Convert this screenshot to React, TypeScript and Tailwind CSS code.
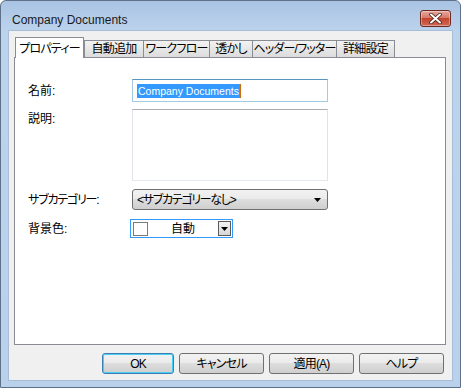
import React from 'react';

const tabs = [
  { label: 'プロパティー', w: 'w-[69px]', active: true },
  { label: '自動追加', w: 'w-[60px]' },
  { label: 'ワークフロー', w: 'w-[67px]' },
  { label: '透かし', w: 'w-[44px]' },
  { label: 'ヘッダー/フッター', w: 'w-[85px]' },
  { label: '詳細設定', w: 'w-[59px]' },
];

const DownArrow = () => (
  <svg width="7" height="4" viewBox="0 0 7 4">
    <path d="M0 0h7L3.5 4z" fill="#000" />
  </svg>
);

const CloseButton = () => (
  <div className="mt-[9px] w-[31px] h-[17px] rounded-[3px] border border-[#6d2a22] bg-[linear-gradient(#e4a89d_0%,#d67a6b_45%,#c4452f_50%,#cf6a55_100%)] flex items-center justify-center shadow-[inset_0_0_0_1px_rgba(255,255,255,0.35)]">
    <svg width="13" height="11" viewBox="0 0 13 11">
      <path d="M2 1.5l9 8M11 1.5l-9 8" stroke="#4a1d17" strokeWidth="3.6" strokeLinecap="round" />
      <path d="M2 1.5l9 8M11 1.5l-9 8" stroke="#fff" strokeWidth="2" strokeLinecap="round" />
    </svg>
  </div>
);

const Button = ({ children, w, focus }: { children: React.ReactNode; w: string; focus?: boolean }) => (
  <button
    className={
      w +
      ' h-[21px] rounded-[3px] border text-[12px] leading-none text-black tracking-[-0.8px] bg-[linear-gradient(#f2f2f2_0%,#ebebeb_45%,#dddddd_50%,#cfcfcf_100%)] ' +
      (focus ? 'border-[#3c7fb1] shadow-[inset_0_0_0_1px_#48cdf7]' : 'border-[#707070]')
    }
  >
    {children}
  </button>
);

export default function App() {
  return (
    <div className="w-[461px] h-[388px] bg-white font-['Liberation_Sans','Noto_Sans_CJK_JP',sans-serif] [font-feature-settings:'palt'] text-[12px] text-black">
      <div className="w-full h-full flex flex-col rounded-t-[6px] border border-[#5f7188] bg-[linear-gradient(#a9c3e3_0px,#bcd3ec_30px,#b9d1ea_100%)] px-[7px] pb-[6px]">
        {/* title bar */}
        <div className="h-[29px] flex items-start justify-between pr-[2px]">
          <span className="mt-[10px] ml-[4px] text-[12px] text-[#1a1a1a] font-['Liberation_Sans',sans-serif]">Company Documents</span>
          <CloseButton />
        </div>

        {/* client area */}
        <div className="flex-1 flex flex-col bg-[#f0f0f0] border border-[#a8bed8] pt-[6px]">
          {/* tabs */}
          <div className="flex items-end h-[20px] ml-[6px] tracking-[-0.8px]">
            {tabs.map((t, i) =>
              t.active ? (
                <div
                  key={t.label}
                  className={t.w + ' relative z-10 h-[21px] -mb-px bg-white border border-b-0 border-[#898c95] flex items-center justify-center pt-[1px] whitespace-nowrap'}
                >
                  {t.label}
                </div>
              ) : (
                <div
                  key={t.label}
                  className={
                    t.w +
                    ' h-[17px] -ml-px border border-b-0 border-[#898c95] bg-[linear-gradient(#f2f2f2,#dcdcdc)] flex items-center justify-center whitespace-nowrap ' +
                    (i === 1 ? 'ml-0' : '')
                  }
                >
                  {t.label}
                </div>
              )
            )}
          </div>

          {/* panel */}
          <div className="ml-[5px] w-[432px] h-[288px] bg-white border border-[#898c95] pl-[13px] pt-[21px] flex flex-col">
            <div className="flex items-center h-[23px]">
              <span className="w-[104px]">名前:</span>
              <div className="relative w-[196px] h-[23px] border border-[#a4c9e3] border-t-[#5794bf] flex items-center pl-[4px]">
                <span className="bg-[#3399ff] text-white font-['Liberation_Sans',sans-serif] text-[10.5px] leading-[14px] px-px">Company Documents</span>
                <span className="w-px h-[14px] bg-[#d26a00]" />
              </div>
            </div>

            <div className="flex items-start mt-[7px]">
              <span className="w-[104px] mt-[1px]">説明:</span>
              <div className="w-[196px] h-[72px] border border-[#e2e3ea] border-t-[#abadb3] border-b-[#e3e9ef]" />
            </div>

            <div className="flex items-center mt-[8px]">
              <span className="w-[104px] tracking-[-1.2px]">サブカテゴリー:</span>
              <div className="w-[196px] h-[21px] rounded-[3px] border border-[#707070] bg-[linear-gradient(#f2f2f2_0%,#ebebeb_45%,#dddddd_50%,#cfcfcf_100%)] flex items-center justify-between pl-[4px] pr-[6px]">
                <span className="tracking-[-1.3px]">&lt;サブカテゴリーなし&gt;</span>
                <DownArrow />
              </div>
            </div>

            <div className="flex items-center mt-[9px]">
              <span className="w-[102px]">背景色:</span>
              <div className="w-[103px] h-[19px] border border-[#3399ff] bg-white flex items-center pl-[2px] pr-px">
                <div className="w-[15px] h-[14px] border border-[#7a7a7a]" />
                <span className="flex-1 text-center">自動</span>
                <div className="w-[13px] h-[15px] border border-[#5a5a5a] bg-[linear-gradient(#f4f4f4,#d6d6d6)] flex items-center justify-center">
                  <DownArrow />
                </div>
              </div>
            </div>
          </div>

          {/* buttons */}
          <div className="flex justify-end gap-[5px] mt-[8px] pr-[8px]">
            <Button w="w-[72px]" focus>OK</Button>
            <Button w="w-[85px]">キャンセル</Button>
            <Button w="w-[85px]">適用(A)</Button>
            <Button w="w-[85px]">ヘルプ</Button>
          </div>
        </div>
      </div>
    </div>
  );
}
